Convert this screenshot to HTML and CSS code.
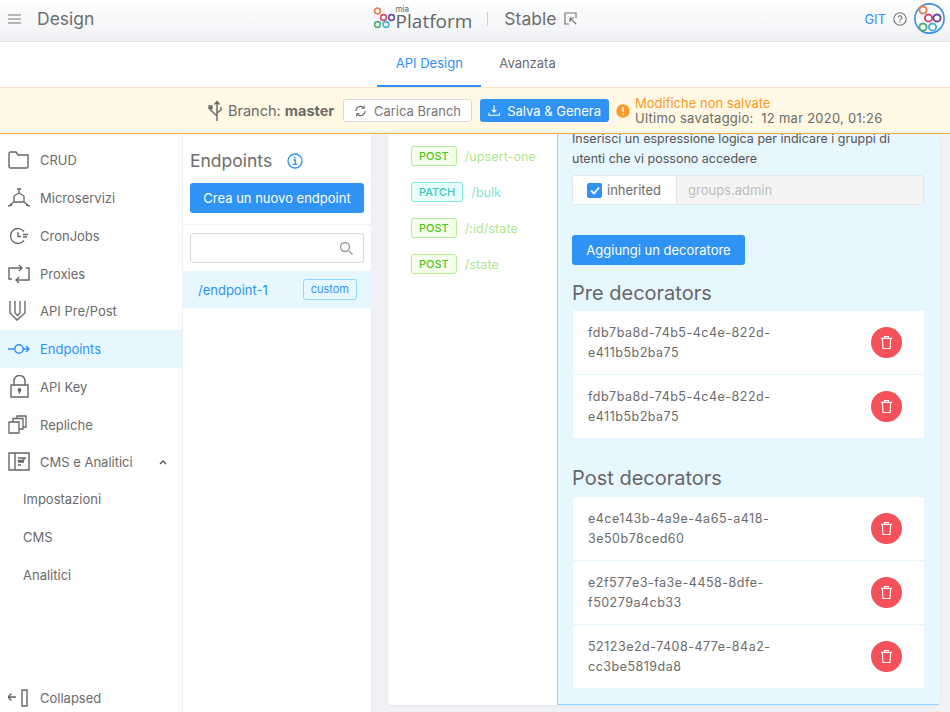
FILE: index.html
```html
<!DOCTYPE html>
<html lang="it">
<head>
    <meta charset="UTF-8">
    <meta name="viewport" content="width=device-width, initial-scale=1.0">
    <title>Design</title>
    <link rel="stylesheet" href="styles.css">
</head>
<body>
    <header class="topbar">
        <div class="topbar-left">
            <svg class="hamburger" width="13" height="10" viewBox="0 0 13 10"><path d="M0 1h13M0 5h13M0 9h13" stroke="#777" stroke-width="1.2"/></svg>
            <span class="page-title">Design</span>
        </div>
        <div class="topbar-center">
            <svg class="logo-mark" width="23" height="23" viewBox="0 0 23 23" fill="none" stroke-width="1.6">
                <circle cx="4.5" cy="4" r="2.9" stroke="#e8834f"/>
                <circle cx="10.5" cy="10.5" r="2.9" stroke="#d9486a"/>
                <circle cx="18.5" cy="10.5" r="2.9" stroke="#6a4c9c"/>
                <circle cx="4.5" cy="17.5" r="2.9" stroke="#4fae7b"/>
                <circle cx="13" cy="17.5" r="2.9" stroke="#4fb3d9"/>
            </svg>
            <div class="logo-text"><span class="logo-mia">mia</span><span class="logo-name">Platform</span></div>
            <span class="topbar-divider"></span>
            <span class="env-name">Stable</span>
            <svg width="13" height="13" viewBox="0 0 13 13" fill="none" stroke="#777" stroke-width="1.2"><path d="M5 12H1V1h11v5M6 6l6 6M6 6h4M6 6v4"/></svg>
        </div>
        <div class="topbar-right">
            <span class="git-link">GIT</span>
            <svg width="14" height="14" viewBox="0 0 14 14" fill="none" stroke="#777" stroke-width="1.1"><circle cx="7" cy="7" r="6.2"/><path d="M5.2 5.5a1.8 1.8 0 1 1 2.6 1.6c-.6.3-.8.7-.8 1.3"/><path d="M7 9.6v1.1"/></svg>
            <svg width="31" height="31" viewBox="0 0 31 31" fill="#fff" stroke-width="2">
                <circle cx="15.5" cy="15.5" r="14.6" stroke="#3b8ee6" stroke-width="1.6"/>
                <circle cx="9" cy="7" r="3.6" stroke="#e8834f"/>
                <circle cx="14.5" cy="15" r="3.6" stroke="#d9486a"/>
                <circle cx="23" cy="15" r="3.6" stroke="#6a4c9c"/>
                <circle cx="9" cy="24" r="3.6" stroke="#4fae7b"/>
                <circle cx="18.5" cy="24" r="3.6" stroke="#4fb3d9"/>
            </svg>
        </div>
    </header>

    <nav class="tabs">
        <a class="tab tab-active">API Design</a>
        <a class="tab">Avanzata</a>
    </nav>

    <div class="branch-bar">
        <svg width="15" height="22" viewBox="0 0 15 22" fill="none" stroke="#666" stroke-width="1.4"><path d="M9 21V2M6.5 4.5 9 1.500l2.500 3M9 16 2.500 10V7M1 8.500h3V6H1zM9 13l4-3V7"/></svg>
        <span class="branch-label">Branch: <b>master</b></span>
        <button class="btn-outline">
            <svg width="14" height="14" viewBox="0 0 14 14" fill="none" stroke="#666" stroke-width="1.1"><path d="M2 7a5 5 0 0 1 8.700-3.300M12 7a5 5 0 0 1-8.700 3.300"/><path d="M11 1v3H8M3 13v-3h3"/></svg>
            Carica Branch
        </button>
        <button class="btn-primary btn-save">
            <svg width="13" height="13" viewBox="0 0 13 13" fill="none" stroke="#fff" stroke-width="1.2"><path d="M6.500 1v7M4 5.800l2.500 2.500L9 5.800M1 9v2.500h11V9"/></svg>
            Salva &amp; Genera
        </button>
        <svg class="warn-icon" width="14" height="14" viewBox="0 0 14 14"><circle cx="7" cy="7" r="6.700" fill="#fa9a28"/><path d="M7 3.200v4.600M7 9.300v1.500" stroke="#fff" stroke-width="1.500"/></svg>
        <div class="save-status">
            <span class="save-warning">Modifiche non salvate</span>
            <span class="save-time">Ultimo savataggio:&nbsp; 12 mar 2020, 01:26</span>
        </div>
    </div>

    <div class="workspace">
        <aside class="sidebar">
            <ul class="menu">
                <li class="menu-item">
                    <svg width="22" height="20" viewBox="0 0 22 20" fill="none" stroke="#666" stroke-width="1.400"><path d="M1 3.500C1 2.500 1.500 2 2.500 2H8l2 3h10v11.500c0 1-.5 1.500-1.500 1.500h-16C1.500 18 1 17.500 1 16.500z"/></svg>
                    CRUD
                </li>
                <li class="menu-item">
                    <svg width="22" height="20" viewBox="0 0 22 20" fill="none" stroke="#666" stroke-width="1.300"><path d="m11 5 5 3v6l-5 0-5 0V8zM11 1v4M6 14l-4 3M16 14l4 3M0 18l4-1M22 18l-4-1M9 1h4"/></svg>
                    Microservizi
                </li>
                <li class="menu-item">
                    <svg width="22" height="20" viewBox="0 0 22 20" fill="none" stroke="#666" stroke-width="1.300"><path d="M16 5.500A7.500 7.500 0 1 0 16 14.500"/><path d="M10 6v4.500h3M15 8.500h5M15 11h4"/></svg>
                    CronJobs
                </li>
                <li class="menu-item">
                    <svg width="22" height="20" viewBox="0 0 22 20" fill="none" stroke="#666" stroke-width="1.400"><path d="M9 4H1v11h3M13 16h8V4h-3M11 1l3 3-3 3M11 13l-3 3 3 3M14 4H9M8 16h5"/></svg>
                    Proxies
                </li>
                <li class="menu-item">
                    <svg width="22" height="22" viewBox="0 0 22 22" fill="none" stroke="#666" stroke-width="1.300"><path d="M2 1v12l7 7 8-7V1M7 1v12M12 1v12M7 13l2.500 2.500L12 13"/></svg>
                    API Pre/Post
                </li>
                <li class="menu-item menu-item-active">
                    <svg width="22" height="14" viewBox="0 0 22 14" fill="none" stroke="#2f93f5" stroke-width="1.500"><circle cx="11" cy="7" r="4.200"/><path d="M0 7h7M15 7h6M18 4l3 3-3 3"/></svg>
                    Endpoints
                </li>
                <li class="menu-item">
                    <svg width="22" height="24" viewBox="0 0 22 24" fill="none" stroke="#666" stroke-width="1.400"><path d="M3 10h17v12H3zM6 10V6a5.500 5.500 0 0 1 11 0v4"/><circle cx="11.500" cy="15" r="1.200" fill="#666"/><path d="M11.500 16v2.500"/></svg>
                    API Key
                </li>
                <li class="menu-item">
                    <svg width="22" height="20" viewBox="0 0 22 20" fill="none" stroke="#666" stroke-width="1.300"><path d="M1 7h10v11H1zM5 7V3.500h10V14h-4M9 3.500V1h9v11h-3"/></svg>
                    Repliche
                </li>
                <li class="menu-item">
                    <svg width="22" height="20" viewBox="0 0 22 20" fill="none" stroke="#666" stroke-width="1.400"><path d="M1 1h20v17H1zM7 1v17M10 6h7l-2 2.500h-5M10 10h6M10 13h3"/></svg>
                    CMS e Analitici
                    <svg class="menu-caret" width="8" height="6" viewBox="0 0 8 6" fill="none" stroke="#555" stroke-width="1.400"><path d="M1 5 4 2l3 3"/></svg>
                </li>
                <li class="menu-sub">Impostazioni</li>
                <li class="menu-sub">CMS</li>
                <li class="menu-sub">Analitici</li>
            </ul>
            <div class="menu-item collapse-item">
                <svg width="22" height="20" viewBox="0 0 22 20" fill="none" stroke="#666" stroke-width="1.400"><path d="M0 9h8M3.500 5.500 0 9l3.500 3.500M14 2h5v16h-5z"/></svg>
                Collapsed
            </div>
        </aside>

        <section class="endpoints">
            <div class="endpoints-head">
                <h2 class="endpoints-title">Endpoints
                    <svg width="16" height="16" viewBox="0 0 16 16" fill="none" stroke="#2f93f5" stroke-width="1.300"><circle cx="8" cy="8" r="7"/><path d="M6.300 7h2v4.200M6 11.300h4.200" /><path d="M7.800 3.800v1.500" stroke-width="1.800"/></svg>
                </h2>
                <button class="btn-primary btn-wide">Crea un nuovo endpoint</button>
            </div>
            <div class="search-wrap">
                <div class="search-box">
                    <svg width="14" height="14" viewBox="0 0 14 14" fill="none" stroke="#999" stroke-width="1.300"><circle cx="6" cy="6" r="4.500"/><path d="m9.500 9.500 4 4"/></svg>
                </div>
            </div>
            <div class="endpoint-row">
                <span>/endpoint-1</span>
                <span class="tag-custom">custom</span>
            </div>
        </section>

        <main class="content">
            <div class="card">
                <ul class="routes">
                    <li class="route route-post"><span class="method">POST</span>/upsert-one</li>
                    <li class="route route-patch"><span class="method">PATCH</span>/bulk</li>
                    <li class="route route-post"><span class="method">POST</span>/:id/state</li>
                    <li class="route route-post"><span class="method">POST</span>/state</li>
                </ul>
                <div class="detail">
                    <p class="detail-text">Inserisci un espressione logica per indicare i gruppi di utenti che vi possono accedere</p>
                    <div class="group-input">
                        <div class="group-check">
                            <span class="checkbox">
                                <svg width="10" height="9" viewBox="0 0 10 9" fill="none" stroke="#fff" stroke-width="1.800"><path d="m1 4.500 3 3 5-6"/></svg>
                            </span>
                            inherited
                        </div>
                        <div class="group-value">groups.admin</div>
                    </div>
                    <button class="btn-primary btn-add">Aggiungi un decoratore</button>

                    <h3 class="deco-title">Pre decorators</h3>
                    <ul class="deco-list">
                        <li class="deco-row"><span class="deco-id">fdb7ba8d-74b5-4c4e-822d-e411b5b2ba75</span><span class="btn-delete"><svg width="13" height="15" viewBox="0 0 14 16" fill="none" stroke="#fff" stroke-width="1.200"><path d="M1 3.500h12M5 3.500V1.500h4v2M2.500 3.500l.7 11h7.600l.7-11"/></svg></span></li>
                        <li class="deco-row"><span class="deco-id">fdb7ba8d-74b5-4c4e-822d-e411b5b2ba75</span><span class="btn-delete"><svg width="13" height="15" viewBox="0 0 14 16" fill="none" stroke="#fff" stroke-width="1.200"><path d="M1 3.500h12M5 3.500V1.500h4v2M2.500 3.500l.7 11h7.600l.7-11"/></svg></span></li>
                    </ul>

                    <h3 class="deco-title deco-title-post">Post decorators</h3>
                    <ul class="deco-list">
                        <li class="deco-row"><span class="deco-id">e4ce143b-4a9e-4a65-a418-3e50b78ced60</span><span class="btn-delete"><svg width="13" height="15" viewBox="0 0 14 16" fill="none" stroke="#fff" stroke-width="1.200"><path d="M1 3.500h12M5 3.500V1.500h4v2M2.500 3.500l.7 11h7.600l.7-11"/></svg></span></li>
                        <li class="deco-row"><span class="deco-id">e2f577e3-fa3e-4458-8dfe-f50279a4cb33</span><span class="btn-delete"><svg width="13" height="15" viewBox="0 0 14 16" fill="none" stroke="#fff" stroke-width="1.200"><path d="M1 3.500h12M5 3.500V1.500h4v2M2.500 3.500l.7 11h7.600l.7-11"/></svg></span></li>
                        <li class="deco-row"><span class="deco-id">52123e2d-7408-477e-84a2-cc3be5819da8</span><span class="btn-delete"><svg width="13" height="15" viewBox="0 0 14 16" fill="none" stroke="#fff" stroke-width="1.200"><path d="M1 3.500h12M5 3.500V1.500h4v2M2.500 3.500l.7 11h7.600l.7-11"/></svg></span></li>
                    </ul>
                </div>
            </div>
        </main>
    </div>
</body>
</html>
```

FILE: styles.css
```css
* {
    box-sizing: border-box;
}

body {
    margin: 0;
    height: 712px;
    overflow: hidden;
    display: flex;
    flex-direction: column;
    font-family: "Inter", "Liberation Sans", sans-serif;
    font-size: 13px;
    color: #6b6b6b;
    background-color: #fff;
}

ul {
    list-style: none;
    margin: 0;
    padding: 0;
}

button {
    font-family: inherit;
    white-space: nowrap;
    cursor: pointer;
}

/* barra in alto */
.topbar {
    height: 42px;
    flex: none;
    display: grid;
    grid-template-columns: 1fr auto 1fr;
    align-items: center;
    padding-bottom: 4px;
    background: linear-gradient(#ffffff, #eff1f4);
    border-bottom: 1px solid #e2e3e6;
}

.topbar-left {
    display: flex;
    align-items: center;
    padding-left: 8px;
}

.page-title {
    margin-left: 16px;
    font-size: 17.500px;
    color: #6e6e6e;
}

.topbar-center {
    display: flex;
    align-items: center;
}

.logo-text {
    display: flex;
    flex-direction: column;
    color: #666;
    line-height: 1;
}

.logo-mia {
    font-size: 8px;
    height: 7px;
    margin-top: -2px;
}

.logo-name {
    font-family: "Open Sans", sans-serif;
    font-size: 19px;
}

.topbar-divider {
    width: 1px;
    height: 14px;
    margin: 0 16px 0 15px;
    background-color: #cfcfcf;
}

.env-name {
    margin-right: 8px;
    font-size: 17.500px;
    color: #6e6e6e;
}

.topbar-right {
    display: flex;
    align-items: center;
    justify-content: flex-end;
    gap: 7px;
    padding-right: 5px;
}

.git-link {
    color: #2f93f5;
}

/* tab */
.tabs {
    height: 45px;
    flex: none;
    display: flex;
    justify-content: center;
    padding-right: 17px;
}

.tab {
    line-height: 43px;
    text-align: center;
    font-size: 13px;
    color: #6b6b6b;
}

.tab-active {
    width: 104px;
    margin-right: 18px;
    color: #2f93f5;
    border-bottom: 2px solid #2f93f5;
}

/* barra branch */
.branch-bar {
    height: 47px;
    flex: none;
    display: flex;
    align-items: center;
    padding-left: 208px;
    background-color: #fff8e4;
    border-top: 1px solid #f7e8c8;
    border-bottom: 1px solid #f5a54a;
}

.branch-label {
    width: 108px;
    margin-left: 5px;
    font-size: 14.500px;
    white-space: nowrap;
    color: #6b6b6b;
}

.btn-outline {
    display: flex;
    align-items: center;
    gap: 7px;
    height: 23px;
    width: 129px;
    margin-left: 7px;
    padding: 0 10px;
    font-size: 13px;
    color: #777;
    background-color: #fff;
    border: 1px solid #d9d9d9;
    border-radius: 3px;
}

.btn-primary {
    color: #fff;
    font-size: 13px;
    background-color: #2f93f5;
    border: none;
    border-radius: 3px;
}

.btn-save {
    display: flex;
    align-items: center;
    gap: 7px;
    height: 23px;
    width: 129px;
    margin-left: 8px;
    padding: 0 8px;
}

.warn-icon {
    margin-left: 7px;
}

.save-status {
    display: flex;
    flex-direction: column;
    margin-left: 5px;
    line-height: 15px;
    font-size: 13px;
}

.save-warning {
    color: #fa9a28;
}

.save-time {
    letter-spacing: 0.25px;
}

/* area principale */
.workspace {
    flex: 1;
    min-height: 0;
    display: flex;
}

.sidebar {
    width: 183px;
    flex: none;
    display: flex;
    flex-direction: column;
    justify-content: space-between;
    padding: 7.400px 0 0;
    border-right: 1px solid #f0f0f0;
}

.menu-item {
    display: flex;
    align-items: center;
    height: 37.750px;
    padding-left: 8px;
    color: #6b6b6b;
}

.menu-item svg:first-child {
    margin-right: 10px;
    flex: none;
}

.menu-item-active {
    color: #2f93f5;
    background-color: #e6f7ff;
}

.menu-caret {
    margin-left: 26px;
}

.menu-sub {
    height: 37.750px;
    line-height: 37.750px;
    padding-left: 23px;
}

.collapse-item {
    height: 28px;
}

.endpoints {
    width: 188px;
    flex: none;
}

.endpoints-head {
    height: 91px;
    padding: 15px 7px 0;
    border-bottom: 1px solid #f0f0f0;
}

.endpoints-title {
    display: flex;
    align-items: center;
    gap: 15px;
    margin: 0 0 10px;
    font-size: 17.500px;
    font-weight: 400;
    line-height: 24px;
    color: #6e6e6e;
}

.btn-wide {
    width: 174px;
    height: 30px;
}

.search-wrap {
    padding: 8px 7px;
}

.search-box {
    display: flex;
    align-items: center;
    justify-content: flex-end;
    height: 30px;
    padding-right: 10px;
    background-color: #fff;
    border: 1px solid #d9d9d9;
    border-radius: 3px;
}

.endpoint-row {
    display: flex;
    align-items: center;
    justify-content: space-between;
    height: 37px;
    padding: 0 14px 0 15px;
    color: #2f93f5;
    background-color: #e6f7ff;
}

.tag-custom {
    height: 21px;
    padding: 0 7px;
    font-size: 11px;
    line-height: 19px;
    background-color: #e6f7ff;
    border: 1px solid #91d5ff;
    border-radius: 3px;
}

.content {
    flex: 1;
    min-width: 0;
    padding: 0 10px 7px 17px;
    background-color: #f0f2f5;
}

.card {
    height: 100%;
    display: flex;
    overflow: hidden;
    background-color: #fff;
    border-radius: 0 0 3px 3px;
    box-shadow: 0 1px 3px rgba(0, 0, 0, 0.06);
}

.routes {
    width: 169px;
    flex: none;
    padding: 4px 0 0 23px;
}

.route {
    display: flex;
    align-items: center;
    height: 36px;
    font-size: 12.700px;
}

.method {
    height: 20px;
    margin-right: 8px;
    padding: 0 7px;
    font-size: 11px;
    font-weight: 500;
    line-height: 18px;
    border-radius: 3px;
}

.route-post {
    color: #b0e68f;
}

.route-post .method {
    color: #52c41a;
    background-color: #f6ffed;
    border: 1px solid #b7eb8f;
}

.route-patch {
    color: #7fe3dc;
}

.route-patch .method {
    color: #3fc4bc;
    background-color: #e6fffb;
    border: 1px solid #87e8de;
}

.detail {
    flex: 1;
    min-width: 0;
    padding: 0 16px 0 14px;
    background-color: #e6f7ff;
    border-left: 1px solid #91d5ff;
    border-bottom: 1px solid #91d5ff;
}

/* il pannello e' scrollato, la prima riga esce sopra */
.detail-text {
    margin: -5px 0 6px;
    line-height: 20px;
    font-size: 12.500px;
    color: #555;
}

.group-input {
    display: flex;
    height: 30px;
    border: 1px solid #e2e5e8;
    border-radius: 3px;
}

.group-check {
    display: flex;
    align-items: center;
    gap: 5px;
    width: 103px;
    padding-left: 14px;
    background-color: #fff;
}

.checkbox {
    display: flex;
    align-items: center;
    justify-content: center;
    width: 15px;
    height: 15px;
    background-color: #2f93f5;
    border-radius: 2px;
}

.group-value {
    flex: 1;
    padding-left: 11px;
    line-height: 28px;
    color: #bdbdbd;
    background-color: #f4f4f4;
    border-left: 1px solid #e2e5e8;
}

.btn-add {
    display: block;
    width: 173px;
    height: 30px;
    margin-top: 30px;
}

.deco-title {
    margin: 14px 0 4px;
    font-size: 20px;
    font-weight: 400;
    line-height: 28px;
    color: #666;
}

.deco-title-post {
    margin-top: 26px;
    margin-bottom: 5px;
}

.deco-list {
    margin-left: 1px;
}

.deco-row {
    display: flex;
    align-items: center;
    justify-content: space-between;
    height: 63px;
    margin-bottom: 1px;
    padding: 0 22px 0 15px;
    background-color: #fff;
}

.deco-id {
    width: 195px;
    font-size: 12.500px;
    line-height: 20px;
    letter-spacing: 0.5px;
    overflow-wrap: anywhere;
}

.btn-delete {
    display: flex;
    align-items: center;
    justify-content: center;
    width: 31px;
    height: 31px;
    background-color: #f5515a;
    border-radius: 50%;
}
```
